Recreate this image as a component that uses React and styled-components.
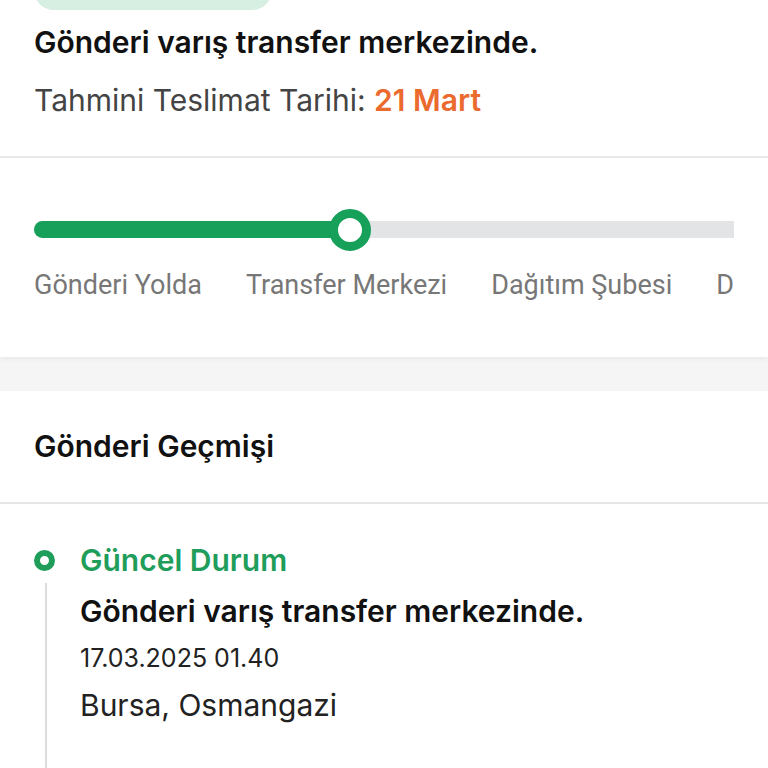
import React from 'react';
import styled, { createGlobalStyle } from 'styled-components';

const Global = createGlobalStyle`
  body {
    margin: 0;
    background: #f5f5f5;
    font-family: Inter, "Noto Sans", sans-serif;
    color: #111;
  }
`;

const Page = styled.div`
  width: 768px;
  height: 768px;
  overflow: hidden;
  display: flex;
  flex-direction: column;
`;

const SummaryCard = styled.section`
  background: #fff;
  box-shadow: 0 2px 6px rgba(0, 0, 0, 0.05);
`;

const SummaryTop = styled.div`
  padding: 0 34px 37px;
  border-bottom: 2px solid #e9e9e9;
`;

const Badge = styled.div`
  width: 238px;
  height: 40px;
  margin-top: -30px;
  background: #d7efe2;
  border-radius: 20px;
`;

const Title = styled.h1`
  margin: 13px 0 0;
  font-size: 30px;
  font-weight: 600;
  line-height: 38px;
  color: #111;
`;

const Estimate = styled.p`
  margin: 20px 0 0;
  font-size: 30px;
  line-height: 38px;
  color: #444;
  span {
    color: #eb6a2e;
    font-weight: 600;
  }
`;

const ProgressArea = styled.div`
  padding: 63px 34px 55px;
`;

const Track = styled.div`
  position: relative;
  height: 17px;
  background: #e3e4e6;
  border-radius: 9px 0 0 9px;
`;

const Fill = styled.div`
  height: 100%;
  background: #16a05a;
  border-radius: 9px 0 0 9px;
`;

const Knob = styled.div`
  position: absolute;
  top: 50%;
  width: 24px;
  height: 24px;
  border: 9px solid #16a05a;
  background: #fff;
  border-radius: 50%;
  transform: translate(-50%, -50%);
`;

const Steps = styled.div`
  display: flex;
  gap: 44px;
  margin-top: 30px;
  overflow: hidden;
  white-space: nowrap;
`;

const Step = styled.span`
  font-family: Roboto, Inter, sans-serif;
  font-size: 27px;
  line-height: 34px;
  color: #777;
  flex-shrink: 0;
`;

const Gap = styled.div`
  height: 34px;
  flex-shrink: 0;
`;

const HistoryCard = styled.section`
  background: #fff;
  flex: 1;
`;

const HistoryHeader = styled.h2`
  margin: 0;
  padding: 36px 34px 37px;
  font-size: 30px;
  font-weight: 600;
  line-height: 38px;
  border-bottom: 2px solid #e6e6e6;
`;

const Timeline = styled.div`
  padding: 37px 34px 0;
`;

const Event = styled.div`
  display: grid;
  grid-template-columns: 46px 1fr;
  grid-template-rows: auto auto;
`;

const DotCell = styled.div`
  display: flex;
  align-items: center;
`;

const Dot = styled.div`
  width: 21px;
  height: 21px;
  box-sizing: border-box;
  border: 6px solid #1f9d5a;
  border-radius: 50%;
  background: #fff;
`;

const Line = styled.div`
  width: 2px;
  margin-left: 11px;
  background: #dcdcdc;
  height: 220px;
  margin-top: 4px;
`;

const Status = styled.div`
  font-size: 30px;
  font-weight: 600;
  line-height: 38px;
  color: #1f9d5a;
`;

const Body = styled.div`
  padding-top: 13px;
`;

const EventTitle = styled.div`
  font-size: 30px;
  font-weight: 600;
  line-height: 38px;
  color: #111;
`;

const EventTime = styled.div`
  margin-top: 12px;
  font-size: 25px;
  line-height: 32px;
  color: #222;
`;

const EventPlace = styled.div`
  margin-top: 12px;
  font-size: 30px;
  line-height: 38px;
  color: #222;
`;

const steps = ['Gönderi Yolda', 'Transfer Merkezi', 'Dağıtım Şubesi', 'Dağıtımda', 'Teslim Edildi'];

export default function App() {
  return (
    <Page>
      <Global />
      <SummaryCard>
        <SummaryTop>
          <Badge />
          <Title>Gönderi varış transfer merkezinde.</Title>
          <Estimate>
            Tahmini Teslimat Tarihi: <span>21 Mart</span>
          </Estimate>
        </SummaryTop>
        <ProgressArea>
          <Track>
            <Fill style={{ width: '45.1%' }} />
            <Knob style={{ left: '45.1%' }} />
          </Track>
          <Steps>
            {steps.map((s) => (
              <Step key={s}>{s}</Step>
            ))}
          </Steps>
        </ProgressArea>
      </SummaryCard>
      <Gap />
      <HistoryCard>
        <HistoryHeader>Gönderi Geçmişi</HistoryHeader>
        <Timeline>
          <Event>
            <DotCell>
              <Dot />
            </DotCell>
            <Status>Güncel Durum</Status>
            <Line />
            <Body>
              <EventTitle>Gönderi varış transfer merkezinde.</EventTitle>
              <EventTime>17.03.2025 01.40</EventTime>
              <EventPlace>Bursa, Osmangazi</EventPlace>
            </Body>
          </Event>
        </Timeline>
      </HistoryCard>
    </Page>
  );
}
